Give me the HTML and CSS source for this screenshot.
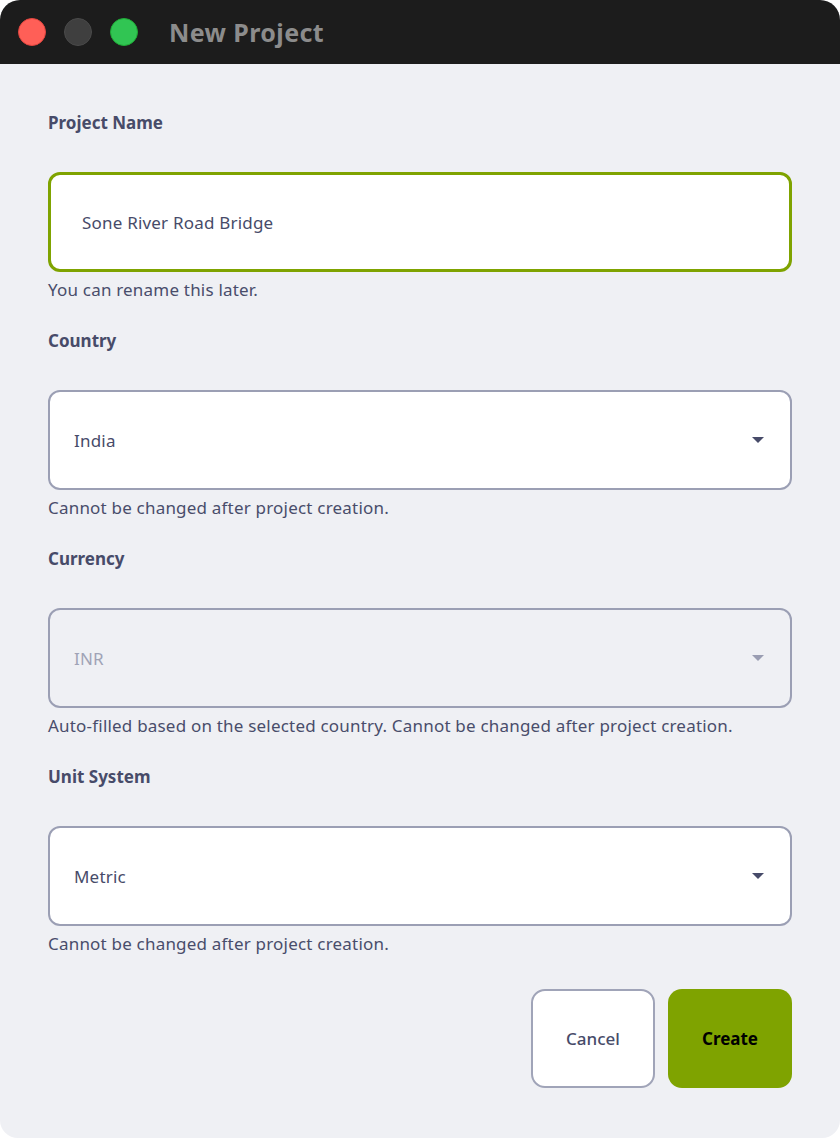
FILE: index.html
```html
<!DOCTYPE html>
<html>
<head>
<meta charset="utf-8">
<link rel="stylesheet" href="styles.css">
</head>
<body>
<div class="window">
  <div class="titlebar">
    <div class="lights">
      <span class="light red"></span>
      <span class="light gray"></span>
      <span class="light green"></span>
    </div>
    <div class="title">New Project</div>
  </div>
  <div class="content">
    <div class="field">
      <div class="label">Project Name</div>
      <div class="box focused"><span class="value">Sone River Road Bridge</span></div>
      <div class="hint">You can rename this later.</div>
    </div>
    <div class="field">
      <div class="label">Country</div>
      <div class="box select"><span class="value">India</span><span class="caret"></span></div>
      <div class="hint">Cannot be changed after project creation.</div>
    </div>
    <div class="field">
      <div class="label">Currency</div>
      <div class="box select disabled"><span class="value">INR</span><span class="caret"></span></div>
      <div class="hint">Auto-filled based on the selected country. Cannot be changed after project creation.</div>
    </div>
    <div class="field">
      <div class="label">Unit System</div>
      <div class="box select"><span class="value">Metric</span><span class="caret"></span></div>
      <div class="hint">Cannot be changed after project creation.</div>
    </div>
    <div class="actions">
      <button class="btn cancel">Cancel</button>
      <button class="btn create">Create</button>
    </div>
  </div>
</div>
</body>
</html>
```
FILE: styles.css
```css
html, body {
  margin: 0;
  padding: 0;
  background: #ffffff;
}
body {
  font-family: "Noto Sans", "Open Sans", sans-serif;
  color: #494d6b;
}
.window {
  width: 840px;
  height: 1138px;
  background: #eff0f4;
  border-radius: 20px 20px 18px 18px;
  overflow: hidden;
  display: flex;
  flex-direction: column;
}
.titlebar {
  height: 64px;
  background: #1c1c1c;
  display: flex;
  align-items: center;
  flex-shrink: 0;
}
.lights {
  display: flex;
  gap: 18px;
  padding-left: 18px;
}
.light {
  width: 28px;
  height: 28px;
  border-radius: 50%;
  display: block;
  box-sizing: border-box;
}
.red { background: #ff5f57; border: 1px solid #e2463f; }
.gray { background: #3f3f3f; border: 1px solid #4a4a4a; }
.green { background: #31c553; border: 1px solid #1faa36; }
.title {
  margin-left: 31px;
  font-size: 25px;
  font-weight: 700;
  color: #8c8c8c;
  letter-spacing: 0.4px;
}
.content {
  padding: 47px 48px 0 48px;
  display: flex;
  flex-direction: column;
}
.field {
  display: flex;
  flex-direction: column;
  margin-bottom: 27px;
}
.label {
  font-size: 17px;
  line-height: 24px;
  font-weight: 700;
  color: #474b69;
  margin-bottom: 37px;
}
.box {
  height: 100px;
  box-sizing: border-box;
  background: #ffffff;
  border: 2px solid #9b9fb4;
  border-radius: 12px;
  display: flex;
  align-items: center;
  padding: 0 26px 0 24px;
  font-size: 17px;
  letter-spacing: 0.2px;
  color: #474b69;
}
.box.focused {
  border: 3px solid #7fa300;
  padding-left: 31px;
}
.value { flex: 1; }
.caret {
  width: 0;
  height: 0;
  border-left: 6px solid transparent;
  border-right: 6px solid transparent;
  border-top: 6px solid #474b69;
}
.box.disabled {
  background: #eff0f4;
  color: #a0a3b6;
}
.box.disabled .caret { border-top-color: #9a9db2; }
.hint {
  font-size: 17px;
  letter-spacing: 0.2px;
  line-height: 24px;
  margin-top: 6px;
  color: #494d6b;
}
.actions {
  display: flex;
  justify-content: flex-end;
  gap: 13px;
  margin-top: 6px;
}
.btn {
  width: 124px;
  height: 99px;
  box-sizing: border-box;
  border-radius: 14px;
  font-family: inherit;
  font-size: 17px;
}
.cancel {
  background: #ffffff;
  border: 2px solid #a0a4b8;
  color: #474b69;
  font-weight: 500;
}
.create {
  background: #7fa300;
  border: none;
  color: #000000;
  font-weight: 700;
}
```
